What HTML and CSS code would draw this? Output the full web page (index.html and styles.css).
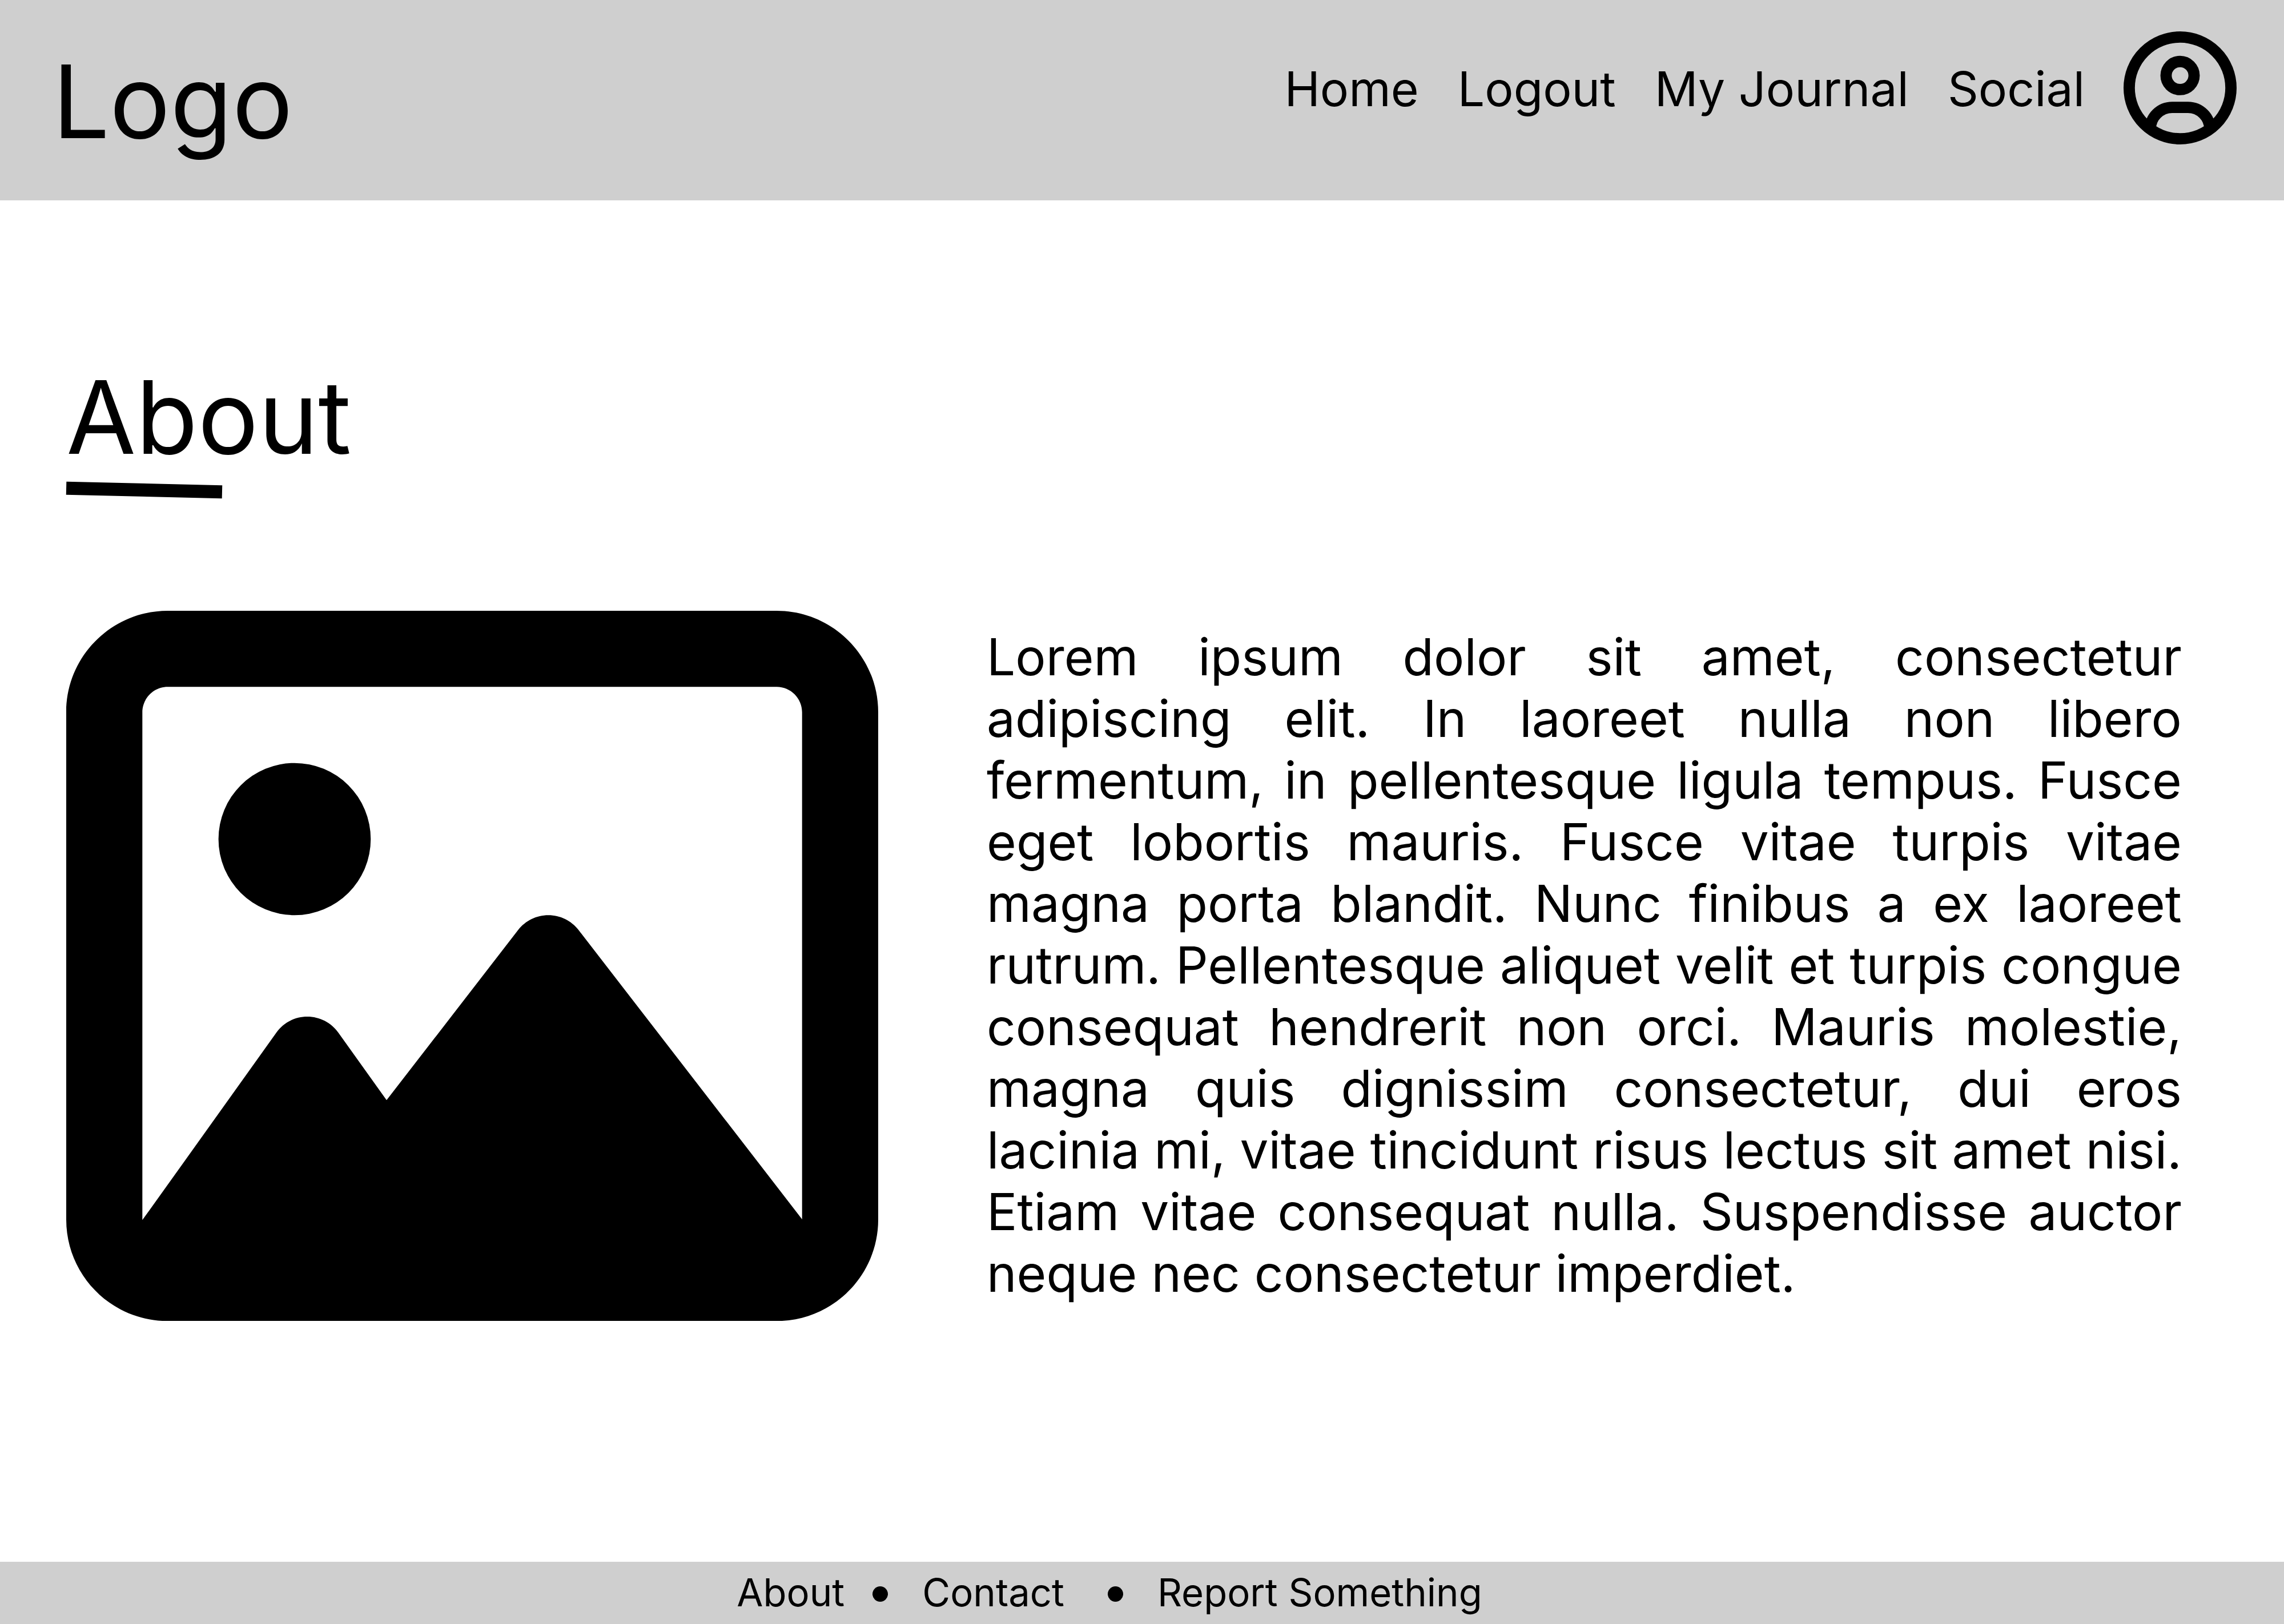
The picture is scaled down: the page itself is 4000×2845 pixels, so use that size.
FILE: index.html
```html
<!DOCTYPE html>
<html lang="en">
<head>
  <meta charset="utf-8">
  <meta name="viewport" content="width=device-width, initial-scale=1">
  <title>About</title>
  <link rel="stylesheet" href="styles.css">
</head>
<body>
  <header class="site-header">
    <a class="logo" href="#">Logo</a>
    <nav class="site-nav" aria-label="Main">
      <a class="nav-link" href="#">Home</a>
      <a class="nav-link" href="#">Logout</a>
      <a class="nav-link" href="#">My Journal</a>
      <a class="nav-link" href="#">Social</a>
      <a class="profile" href="#" aria-label="Profile">
        <svg class="profile-icon" viewBox="-10 -10 20 20" fill="none" stroke="currentColor" stroke-width="2" aria-hidden="true">
          <circle cx="0" cy="0" r="9"/>
          <circle cx="0" cy="-2.19" r="2.48"/>
          <path d="M-5.26 7.3A3.86 3.86 0 0 1 -1.4 3.44H1.4A3.86 3.86 0 0 1 5.26 7.3"/>
        </svg>
      </a>
    </nav>
  </header>

  <main class="content">
    <h1 class="title">About</h1>
    <div class="underline"></div>
    <section class="about">
      <svg class="picture" viewBox="0 32 512 448" fill="currentColor" role="img" aria-label="Picture placeholder">
        <path d="M448 80c8.800 0 16 7.200 16 16V415.800l-5-6.500-136-176c-4.500-5.900-11.600-9.300-19-9.300s-14.400 3.400-19 9.300L202 340.700l-30.500-42.700C167 291.700 159.800 288 152 288s-15 3.700-19.500 10.100l-80 112L48 416.300l0-.3V96c0-8.800 7.200-16 16-16H448zM64 32C28.700 32 0 60.700 0 96V416c0 35.300 28.700 64 64 64H448c35.300 0 64-28.700 64-64V96c0-35.300-28.700-64-64-64H64zm80 192a48 48 0 1 0 0-96 48 48 0 1 0 0 96z"/>
      </svg>
      <p class="description">Lorem ipsum dolor sit amet, consectetur adipiscing elit. In laoreet nulla non libero fermentum, in pellentesque ligula tempus. Fusce eget lobortis mauris. Fusce vitae turpis vitae magna porta blandit. Nunc finibus a ex laoreet rutrum. Pellentesque aliquet velit et turpis congue consequat hendrerit non orci. Mauris molestie, magna quis dignissim consectetur, dui eros lacinia mi, vitae tincidunt risus lectus sit amet nisi. Etiam vitae consequat nulla. Suspendisse auctor neque nec consectetur imperdiet.</p>
    </section>
  </main>

  <footer class="site-footer">
    <a class="footer-link" href="#">About</a>
    <span class="dot"></span>
    <a class="footer-link footer-link-wide" href="#">Contact</a>
    <span class="dot"></span>
    <a class="footer-link" href="#">Report Something</a>
  </footer>
</body>
</html>
```
FILE: styles.css
```css
* {
  box-sizing: border-box;
}

body {
  display: flex;
  flex-direction: column;
  min-height: 100vh;
  margin: 0;
  background: #ffffff;
  color: #000000;
  font-family: Inter, "Liberation Sans", sans-serif;
}

a {
  color: inherit;
  text-decoration: none;
}

.site-header {
  display: flex;
  align-items: flex-start;
  justify-content: space-between;
  padding: 55px 83px 65px 92px;
  background: #cfcfcf;
}

.logo {
  padding-top: 15px;
  font-size: 177px;
  line-height: 216px;
}

.site-nav {
  display: flex;
  align-items: center;
  gap: 68px;
}

.nav-link {
  padding-top: 4px;
  font-size: 84px;
  line-height: 104px;
}

.profile-icon {
  display: block;
  width: 198px;
  height: 198px;
}

.content {
  flex: 1;
  padding: 272px 179px 0 116px;
}

.title {
  margin: 0;
  font-size: 177px;
  font-weight: 400;
  line-height: 216px;
}

.underline {
  width: 273px;
  height: 23px;
  margin-top: 8px;
  background: currentColor;
  transform: rotate(1.4deg);
}

.about {
  display: grid;
  grid-template-columns: 1422fr 2093fr;
  gap: 190px;
  align-items: center;
  margin-top: 200px;
}

.picture {
  display: block;
  width: 100%;
}

.description {
  margin: 0;
  padding-bottom: 2px;
  font-size: 89px;
  line-height: 108px;
  text-align: justify;
}

.site-footer {
  display: flex;
  align-items: center;
  justify-content: center;
  padding: 13px 114px 14px 0;
  background: #cfcfcf;
}

.footer-link {
  font-size: 67px;
  line-height: 82px;
}

.footer-link-wide {
  padding-right: 27px;
}

.dot {
  width: 27px;
  height: 27px;
  margin: 4px 60px 0 49px;
  border-radius: 50%;
  background: currentColor;
}
```
